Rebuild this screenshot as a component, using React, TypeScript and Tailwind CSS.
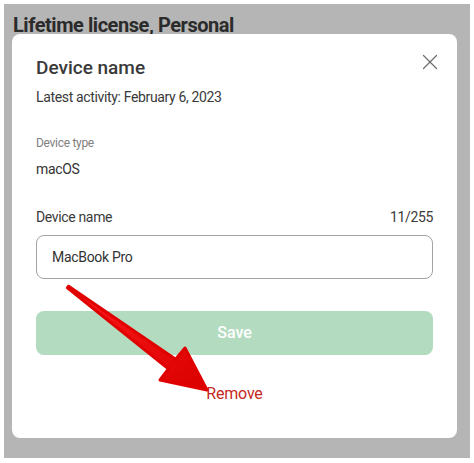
import { X } from 'lucide-react';

function PointerArrow() {
  return (
    <svg
      className="absolute left-0 top-0 pointer-events-none"
      width="474"
      height="463"
      viewBox="0 0 474 463"
    >
      <defs>
        <linearGradient id="arrowFill" x1="0" y1="0" x2="1" y2="1">
          <stop offset="0" stopColor="#ff1a1a" />
          <stop offset="1" stopColor="#d90000" />
        </linearGradient>
      </defs>
      <polygon
        points="68.6,286.2 175.6,359.2 185,348 207,390 160,380 168.4,368.8 67.4,287.8"
        fill="url(#arrowFill)"
        stroke="#e00000"
        strokeWidth="3"
        strokeLinejoin="round"
      />
    </svg>
  );
}

export default function App() {
  return (
    <div className="relative w-[474px] h-[463px] bg-white p-[4px] font-['Roboto',sans-serif]">
      <div className="h-[454px] w-[466px] bg-[#b5b5b5] pl-[8px] pr-[13px]">
        <h1 className="h-[30px] pt-[9px] text-[20px] leading-[24px] font-bold tracking-[-0.45px] text-[#2b2b2b] ml-[1px]">
          Lifetime license, Personal
        </h1>

        {/* Dialog */}
        <div className="relative bg-white rounded-[8px] h-[404px] px-6 pt-[22px]">
          <button className="absolute right-[14px] top-[15px] text-[#6b6b6b]">
            <X size={26} strokeWidth={1.1} />
          </button>

          <h2 className="text-[19px] leading-[24px] font-medium text-[#3a3a3a]">Device name</h2>
          <p className="mt-[7px] text-[14px] leading-[20px] tracking-[-0.35px] text-[#3a3a3a]">
            Latest activity: February 6, 2023
          </p>

          <p className="mt-[28px] text-[12px] leading-[16px] tracking-[-0.3px] text-[#808080]">Device type</p>
          <p className="mt-[8px] text-[14px] leading-[20px] tracking-[-0.35px] text-[#333333]">macOS</p>

          <div className="mt-[28px] flex justify-between text-[14px] leading-[20px] tracking-[-0.35px] text-[#3a3a3a]">
            <span>Device name</span>
            <span>11/255</span>
          </div>

          <div className="mt-[8px] h-[44px] flex items-center rounded-[8px] border border-[#a3a3a3] px-[15px] text-[14px] tracking-[-0.3px] text-[#333333]">
            MacBook Pro
          </div>

          <button className="mt-[32px] w-full h-[44px] rounded-[8px] bg-[#b3dbbf] text-white text-[16px] font-medium">
            Save
          </button>

          <div className="mt-[27px] text-center text-[16px] leading-[24px] tracking-[-0.2px] text-[#c4291f]">Remove</div>
        </div>
      </div>

      <PointerArrow />
    </div>
  );
}
